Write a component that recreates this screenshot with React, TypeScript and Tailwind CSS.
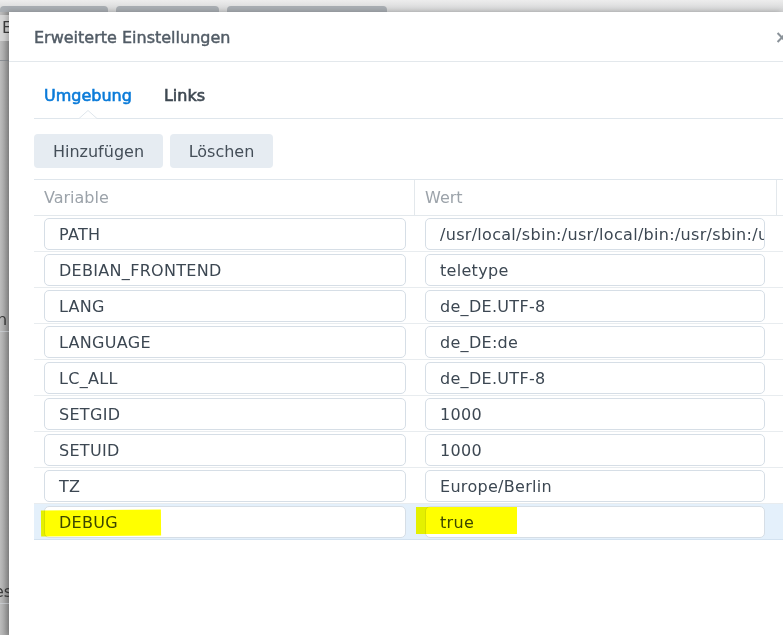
const rows = [
  ["PATH", "/usr/local/sbin:/usr/local/bin:/usr/sbin:/usr/bin:/sbin:/bin"],
  ["DEBIAN_FRONTEND", "teletype"],
  ["LANG", "de_DE.UTF-8"],
  ["LANGUAGE", "de_DE:de"],
  ["LC_ALL", "de_DE.UTF-8"],
  ["SETGID", "1000"],
  ["SETUID", "1000"],
  ["TZ", "Europe/Berlin"],
  ["DEBUG", "true"],
];

const Highlight = ({ className }: { className: string }) => (
  <span
    className={`pointer-events-none absolute bg-[#ffff00] mix-blend-multiply ${className}`}
  />
);

const App = () => {
  return (
    <div
      className="flex flex-col w-[783px] h-[635px] overflow-hidden bg-[#b4b7ba]"
      style={{ fontFamily: '"DejaVu Sans", Verdana, sans-serif' }}
    >
      {/* underlying window, top strip */}
      <div className="flex items-end gap-[8px] h-[12px] shrink-0 bg-gradient-to-b from-[#ededed] to-[#d2d3d4]">
        <div className="h-[6px] w-[108px] rounded-t-[4px] bg-[#a9aeb3]" />
        <div className="h-[6px] w-[103px] rounded-t-[4px] bg-[#a9aeb3]" />
        <div className="h-[6px] w-[160px] rounded-t-[4px] bg-[#a9aeb3]" />
      </div>

      <div className="flex flex-1 min-h-0">
        {/* underlying window, left sliver */}
        <div className="w-[9px] shrink-0 overflow-hidden bg-gradient-to-r from-[#bdbdbd] to-[#9b9b9b] text-[#3d3d3d] text-[16px]">
          <div className="mt-[3px] h-[26px] bg-[#d6d6d6] pl-[2px] leading-[26px]">E</div>
          <div className="h-[20px] border-b border-[#8d9196]" />
          <div className="mt-[247px] h-[24px] leading-[24px] -ml-[3px] border-b border-[#c9ccd0]">n</div>
          <div className="mt-[248px] h-[24px] leading-[24px] -ml-[6px] border-b border-[#c9ccd0]">es</div>
        </div>

        {/* dialog */}
        <div className="flex-1 min-w-0 flex flex-col bg-white shadow-[-2px_0_6px_rgba(0,0,0,0.25)]">
          <div className="flex items-center justify-between h-[50px] shrink-0 pl-[25px] pt-[3px] border-b border-[#e3e8ec]">
            <span className="text-[16px] text-[#525c66] [-webkit-text-stroke:0.45px_#525c66]">
              Erweiterte Einstellungen
            </span>
            <span className="text-[17px] font-bold text-[#8a9299] -mr-[6px]">×</span>
          </div>

          <div className="flex flex-col pl-[25px]">
            <div className="flex gap-[12px] h-[57px] items-end border-b border-[#dfe6ec]">
              <div className="relative px-[10px] pb-[10px] text-[16px] text-[#0a7bd9] [-webkit-text-stroke:0.6px_#0a7bd9]">
                Umgebung
                <svg
                  className="absolute left-1/2 -translate-x-1/2 bottom-[-1px]"
                  width="18"
                  height="9"
                  viewBox="0 0 18 9"
                >
                  <path d="M0 8.5 L9 0.5 L18 8.5" fill="white" stroke="#dfe6ec" strokeWidth="1" />
                </svg>
              </div>
              <div className="px-[10px] pb-[10px] text-[16px] text-[#3e4852] [-webkit-text-stroke:0.6px_#3e4852]">
                Links
              </div>
            </div>

            <div className="flex gap-[7px] mt-[15px]">
              <button className="h-[34px] w-[129px] rounded-[4px] bg-[#e6ecf2] pt-[1px] text-[16px] text-[#444e58]">
                Hinzufügen
              </button>
              <button className="h-[34px] w-[103px] rounded-[4px] bg-[#e6ecf2] pt-[1px] text-[16px] text-[#444e58]">
                Löschen
              </button>
            </div>

            <div className="mt-[11px] flex flex-col border-t border-[#dfe6ec]">
              <div className="flex h-[36px] border-b border-[#e3e8ec] text-[16px] text-[#9ca3aa]">
                <div className="w-[381px] shrink-0 flex items-center pl-[10px] pt-[1px] border-r border-[#e3e8ec]">
                  Variable
                </div>
                <div className="w-[362px] shrink-0 flex items-center pl-[10px] pt-[1px] border-r border-[#e3e8ec]">
                  Wert
                </div>
                <div className="flex-1" />
              </div>

              {rows.map(([name, value]) => {
                const selected = name === "DEBUG";
                return (
                  <div
                    key={name}
                    className={`relative flex h-[36px] items-center border-b ${
                      selected ? "bg-[#e4f0fb] border-[#d3e2f0]" : "border-[#e8ecef]"
                    }`}
                  >
                    <div className="w-[381px] shrink-0 pl-[10px] pr-[9px]">
                      <div className="h-[32px] flex items-center rounded-[5px] border border-[#d6dee6] bg-white pl-[14px] pt-[2px] text-[16px] tracking-[0.3px] text-[#3c4752] overflow-hidden whitespace-nowrap">
                        {name}
                      </div>
                    </div>
                    <div className="w-[350px] shrink-0 pl-[10px]">
                      <div className="h-[32px] flex items-center rounded-[5px] border border-[#d6dee6] bg-white pl-[14px] pt-[2px] text-[16px] tracking-[0.3px] text-[#3c4752] overflow-hidden whitespace-nowrap">
                        {value}
                      </div>
                    </div>
                    {selected && (
                      <>
                        <Highlight className="left-[7px] top-[6px] w-[120px] h-[26px] -rotate-[0.5deg]" />
                        <Highlight className="left-[382px] top-[3px] w-[101px] h-[27px]" />
                      </>
                    )}
                  </div>
                );
              })}
            </div>
          </div>
        </div>
      </div>
    </div>
  );
};

export default App;
